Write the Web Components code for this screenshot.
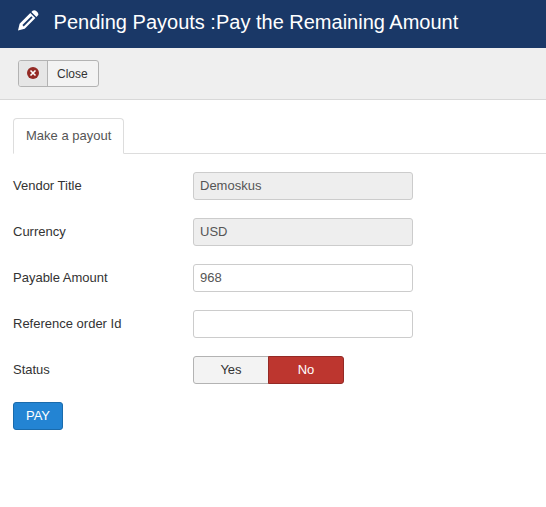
<!DOCTYPE html>
<html lang="en">
<head>
  <meta charset="utf-8">
  <title>Pending Payouts</title>
  <style>
    body {
      margin: 0;
      background: #fff;
      color: #333;
      font: 13px/18px "Liberation Sans", Arial, sans-serif;
    }

    form {
      display: flex;
      flex-direction: column;
      align-items: flex-start;
      gap: 18px;
      padding: 18px 13px;
    }
  </style>
</head>
<body>
  <page-header>Pending Payouts :Pay the Remaining Amount</page-header>
  <tool-bar>
    <tool-button>Close</tool-button>
  </tool-bar>
  <tab-strip>Make a payout</tab-strip>
  <form>
    <form-row label="Vendor Title"><text-field value="Demoskus" readonly></text-field></form-row>
    <form-row label="Currency"><text-field value="USD" readonly></text-field></form-row>
    <form-row label="Payable Amount"><text-field value="968"></text-field></form-row>
    <form-row label="Reference order Id"><text-field value=""></text-field></form-row>
    <form-row label="Status"><yes-no value="0"></yes-no></form-row>
    <primary-button>PAY</primary-button>
  </form>

  <script>
    class PageHeader extends HTMLElement {
      connectedCallback() {
        this.attachShadow({ mode: 'open' });
        this.shadowRoot.innerHTML = `
          <style>
            :host {
              display: flex;
              height: 48px;
              padding-left: 18px;
              background: #1a3867;
              color: #fff;
            }

            svg {
              width: 21px;
              height: 21px;
              margin: 9.5px 14.6px 0 0;
            }

            h1 {
              margin: 0;
              padding-top: 4px;
              font-size: 20px;
              font-weight: normal;
              line-height: 36px;
              white-space: nowrap;
            }
          </style>
          <svg viewBox="0 0 21 21" aria-hidden="true">
            <path fill="#fff" fill-rule="evenodd" d="M0 20.6 1.6 13.7 12.3 3 17.4 8.1 6.7 18.8ZM4.4 15.1 5.7 16.4 14.6 7.5 13.3 6.2Z"/>
            <path fill="#fff" d="M13.4 1.9 14.6.8Q16-.3 17.9.7 20 2 20.4 4 20.5 5 19.6 5.8L18.4 6.9Z"/>
          </svg>
          <h1><slot></slot></h1>
        `;
      }
    }

    class ToolBar extends HTMLElement {
      connectedCallback() {
        this.attachShadow({ mode: 'open' });
        this.shadowRoot.innerHTML = `
          <style>
            :host {
              display: flex;
              align-items: flex-start;
              box-sizing: border-box;
              height: 52px;
              padding: 12px 18px;
              background: #efefef;
              border-bottom: 1px solid #d8d8d8;
            }
          </style>
          <slot></slot>
        `;
      }
    }

    class ToolButton extends HTMLElement {
      connectedCallback() {
        this.attachShadow({ mode: 'open' });
        this.shadowRoot.innerHTML = `
          <style>
            :host {
              display: block;
            }

            button {
              display: flex;
              box-sizing: border-box;
              width: 81px;
              height: 27px;
              padding: 0;
              overflow: hidden;
              background: #f3f3f3;
              border: 1px solid #b3b3b3;
              border-radius: 3px;
              color: #333;
              font: 12px/25px "Liberation Sans", Arial, sans-serif;
            }

            .icon {
              display: flex;
              align-items: center;
              justify-content: center;
              box-sizing: border-box;
              width: 29px;
              height: 25px;
              padding-bottom: 1px;
              background: #e6e6e6;
              border-right: 1px solid #b3b3b3;
            }

            .label {
              padding: 1px 0 0 9px;
            }
          </style>
          <button type="button">
            <span class="icon">
              <svg width="12" height="12" viewBox="0 0 12 12" aria-hidden="true">
                <circle cx="6" cy="6" r="6" fill="#942a25"/>
                <path d="M3.5 3.5l5 5M8.5 3.5l-5 5" stroke="#fff" stroke-width="1.6"/>
              </svg>
            </span>
            <span class="label"><slot></slot></span>
          </button>
        `;
      }
    }

    class TabStrip extends HTMLElement {
      connectedCallback() {
        this.attachShadow({ mode: 'open' });
        this.shadowRoot.innerHTML = `
          <style>
            :host {
              display: flex;
              padding-top: 18px;
            }

            :host::before,
            :host::after {
              content: "";
              width: 13px;
            }

            :host::after {
              flex: 1;
              border-bottom: 1px solid #ddd;
            }

            .tab {
              box-sizing: border-box;
              height: 36px;
              padding: 8px 12px;
              border: 1px solid #ddd;
              border-bottom-color: transparent;
              border-radius: 4px 4px 0 0;
              color: #555;
            }
          </style>
          <div class="tab"><slot></slot></div>
        `;
      }
    }

    class FormRow extends HTMLElement {
      connectedCallback() {
        this.attachShadow({ mode: 'open' });
        this.shadowRoot.innerHTML = `
          <style>
            :host {
              display: flex;
            }

            label {
              width: 180px;
              padding-top: 5px;
            }
          </style>
          <label></label>
          <slot></slot>
        `;
        this.shadowRoot.querySelector('label').textContent = this.getAttribute('label');
      }
    }

    class TextField extends HTMLElement {
      connectedCallback() {
        this.attachShadow({ mode: 'open' });
        this.shadowRoot.innerHTML = `
          <style>
            :host {
              display: block;
            }

            input {
              display: block;
              box-sizing: border-box;
              width: 220px;
              height: 28px;
              padding: 3px 6px 5px;
              background: #fff;
              border: 1px solid #ccc;
              border-radius: 3px;
              color: #555;
              font: 13px/18px "Liberation Sans", Arial, sans-serif;
            }

            input[readonly] {
              background: #eee;
            }
          </style>
          <input type="text">
        `;
        const input = this.shadowRoot.querySelector('input');
        input.value = this.getAttribute('value') || '';
        input.readOnly = this.hasAttribute('readonly');
      }
    }

    class YesNo extends HTMLElement {
      connectedCallback() {
        this.attachShadow({ mode: 'open' });
        this.shadowRoot.innerHTML = `
          <style>
            :host {
              display: flex;
            }

            button {
              box-sizing: border-box;
              width: 76px;
              height: 28px;
              padding: 0;
              background: #f3f3f3;
              border: 1px solid #b3b3b3;
              border-radius: 3px 0 0 3px;
              color: #333;
              font: 13px/18px "Liberation Sans", Arial, sans-serif;
            }

            button + button {
              margin-left: -1px;
              border-radius: 0 3px 3px 0;
            }

            .active-no {
              background: #bd362f;
              border-color: #942a25;
              color: #fff;
            }

            .active-yes {
              background: #46a546;
              border-color: #378137;
              color: #fff;
            }
          </style>
          <button type="button" id="yes">Yes</button>
          <button type="button" id="no">No</button>
        `;
        const yes = this.shadowRoot.getElementById('yes');
        const no = this.shadowRoot.getElementById('no');
        const update = (on) => {
          yes.classList.toggle('active-yes', on);
          no.classList.toggle('active-no', !on);
        };
        yes.addEventListener('click', () => update(true));
        no.addEventListener('click', () => update(false));
        update(this.getAttribute('value') === '1');
      }
    }

    class PrimaryButton extends HTMLElement {
      connectedCallback() {
        this.attachShadow({ mode: 'open' });
        this.shadowRoot.innerHTML = `
          <style>
            :host {
              display: block;
            }

            button {
              box-sizing: border-box;
              width: 50px;
              height: 28px;
              padding: 0;
              background: #2384d3;
              border: 1px solid #1a6bac;
              border-radius: 3px;
              color: #fff;
              font: 13px/18px "Liberation Sans", Arial, sans-serif;
            }
          </style>
          <button type="button"><slot></slot></button>
        `;
      }
    }

    customElements.define('page-header', PageHeader);
    customElements.define('tool-bar', ToolBar);
    customElements.define('tool-button', ToolButton);
    customElements.define('tab-strip', TabStrip);
    customElements.define('form-row', FormRow);
    customElements.define('text-field', TextField);
    customElements.define('yes-no', YesNo);
    customElements.define('primary-button', PrimaryButton);
  </script>
</body>
</html>
